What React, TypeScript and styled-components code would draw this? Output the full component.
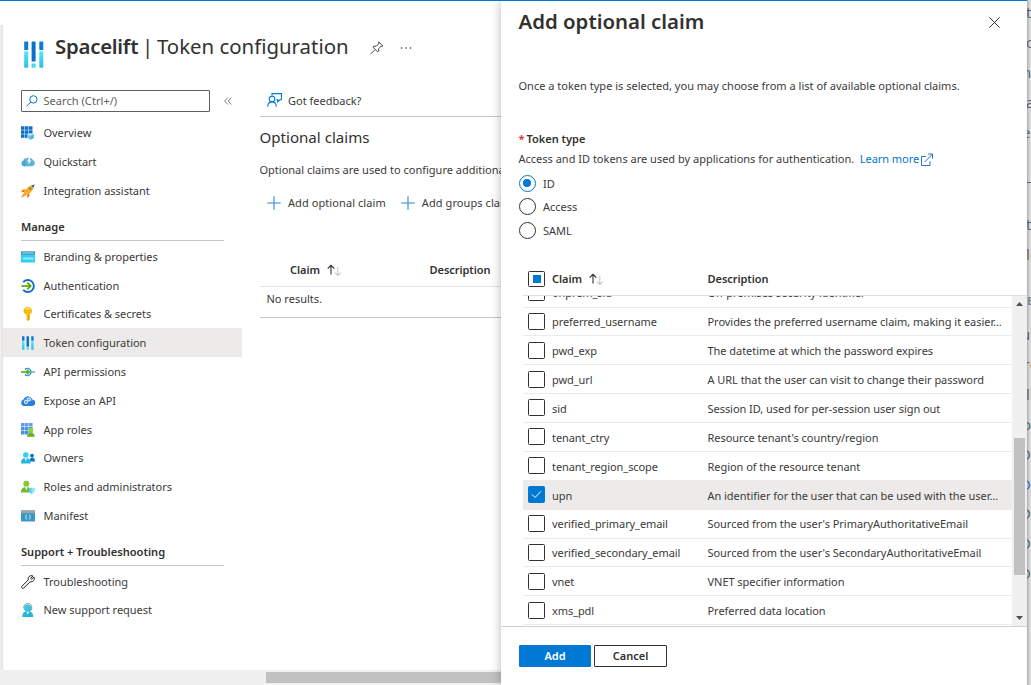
import React from 'react';
import styled, { createGlobalStyle } from 'styled-components';

const GlobalStyle = createGlobalStyle`
  * { box-sizing: border-box; }
  body {
    margin: 0;
    background: #fff;
    color: #3b3a39;
    font-family: "Noto Sans", "Liberation Sans", sans-serif;
    font-size: 11px;
    line-height: 16px;
    overflow: hidden;
  }
  svg { display: block; flex: none; }
`;

/* ---------- page frame ---------- */

const Frame = styled.div`
  display: flex;
  width: 1031px;
  height: 685px;
  overflow: hidden;
  background: #fff;
`;

const Portal = styled.div`
  display: flex;
  width: 1027px;
  flex: none;
  border-top: 1px solid #0078d4;
`;

const Blade = styled.div`
  display: flex;
  flex-direction: column;
  width: 501px;
  overflow: hidden;
`;

const BladeBody = styled.div`
  display: flex;
  height: 669px;
`;

const Gutter = styled.div`
  width: 3px;
  flex: none;
  margin-top: 24px;
  background: linear-gradient(to right, #f1f1f1, #e2e2e2);
`;

const BladeContent = styled.div`
  flex: 1;
  min-width: 0;
`;

const HorizontalTrack = styled.div`
  display: flex;
  align-items: center;
  height: 15px;
  padding-left: 266px;
  background: #f0f0f0;
`;

const HorizontalThumb = styled.div`
  flex: 1;
  height: 11px;
  background: #c1c1c1;
`;

/* ---------- blade header ---------- */

const BladeHeader = styled.header`
  display: flex;
  align-items: flex-start;
  height: 89px;
  padding: 30px 0 0 18px;
`;

const HeaderIcon = styled.div`
  margin: 10px 11px 0 3px;
`;

const Title = styled.h1`
  margin: 0;
  width: 293px;
  font-size: 20.4px;
  line-height: 30px;
  font-weight: 400;
  color: #323130;
  white-space: nowrap;
`;

const TitleName = styled.span`
  font-weight: 600;
  letter-spacing: -0.25px;
`;

const TitleDivider = styled.span`
  margin: 0 -1.6px;
`;

const HeaderAction = styled.div<{ $left: number }>`
  display: flex;
  align-items: center;
  height: 33px;
  margin-left: ${(p) => p.$left}px;
`;

const Columns = styled.div`
  display: flex;
`;

/* ---------- sidebar ---------- */

const Sidebar = styled.nav`
  width: 239px;
  flex: none;
`;

const SearchRow = styled.div`
  display: flex;
  align-items: center;
  gap: 13.5px;
  padding-left: 18px;
  margin-bottom: 6.6px;
`;

const SearchBox = styled.div`
  display: flex;
  align-items: center;
  gap: 5.5px;
  width: 189px;
  height: 22px;
  padding-left: 4px;
  border: 1px solid #605e5c;
  border-radius: 1px;
  color: #605e5c;
  letter-spacing: 0.05px;
`;

const NavRow = styled.a<{ $active?: boolean; $grouped?: boolean }>`
  display: flex;
  align-items: center;
  gap: 8.5px;
  height: 28.8px;
  padding: ${(p) => (p.$grouped ? 1.2 : 0)}px 0 0 18px;
  background: ${(p) => (p.$active ? '#edebe9' : 'transparent')};
  white-space: nowrap;
  letter-spacing: -0.03px;
`;

const SectionTitle = styled.h2`
  width: 203px;
  height: 36px;
  margin: 0 0 0.8px 18px;
  padding-top: 14px;
  border-bottom: 1px solid #c8c6c4;
  font-size: 11.1px;
  font-weight: 600;
  color: #323130;
  white-space: nowrap;
`;

/* ---------- main column ---------- */

const Main = styled.main`
  flex: 1;
  min-width: 0;
  padding-left: 18px;
  overflow: hidden;
  white-space: nowrap;
`;

const FeedbackBar = styled.div`
  display: flex;
  align-items: flex-start;
  gap: 6.5px;
  height: 27px;
  padding: 3px 0 0 6.5px;
  border-bottom: 1px solid #c8c6c4;
`;

const MainHeading = styled.h2`
  margin: 10px 0 0 -0.5px;
  font-size: 15.1px;
  line-height: 20px;
  font-weight: 400;
  color: #323130;
`;

const MainText = styled.p`
  margin: 15px 0 0 -0.5px;
`;

const Commands = styled.div`
  display: flex;
  gap: 15px;
  margin-top: 17px;
  padding-left: 7px;
`;

const Command = styled.button`
  display: flex;
  align-items: center;
  gap: 7px;
  padding: 0;
  border: 0;
  background: none;
  color: inherit;
  font: inherit;
  letter-spacing: 0.08px;
`;

const ResultsHead = styled.div`
  display: grid;
  grid-template-columns: 139.5px 1fr;
  margin-top: 51px;
  height: 25px;
  padding-left: 30px;
  border-bottom: 1px solid #e6e4e2;
`;

const ResultsBody = styled.div`
  height: 31px;
  padding: 4px 0 0 6.5px;
  border-bottom: 1px solid #c8c6c4;
`;

const ColumnTitle = styled.div`
  display: flex;
  gap: 6.5px;
  font-weight: 600;
  color: #323130;
  letter-spacing: -0.05px;
`;

/* ---------- panel ---------- */

const Panel = styled.section`
  display: flex;
  flex-direction: column;
  width: 526px;
  flex: none;
  background: #fff;
  box-shadow: 0 0 10px rgba(0, 0, 0, 0.28);
  clip-path: inset(0 0 0 -14px);
  white-space: nowrap;
`;

const PanelHeader = styled.header`
  display: flex;
  justify-content: space-between;
  padding: 5px 27px 0 17.5px;
`;

const PanelTitle = styled.h1`
  margin: 0;
  font-size: 20.4px;
  line-height: 31px;
  font-weight: 600;
  color: #323130;
`;

const CloseIcon = styled.div`
  padding-top: 10.5px;
`;

const PanelForm = styled.div`
  height: 231px;
  padding: 41px 0 0 17.5px;
`;

const PanelIntro = styled.div`
  letter-spacing: 0.01px;
`;

const FieldLabel = styled.div`
  display: flex;
  gap: 2px;
  margin-top: 37px;
  font-weight: 600;
  color: #323130;
`;

const Required = styled.span`
  color: #f5222d;
`;

const FieldHint = styled.div`
  display: flex;
  margin-top: 4px;
`;

const Link = styled.a`
  display: flex;
  align-items: center;
  gap: 1.5px;
  margin-left: 5.5px;
  color: #0078d4;
  letter-spacing: -0.05px;
`;

const Radios = styled.div`
  padding-top: 4.8px;
`;

const RadioRow = styled.label`
  display: flex;
  align-items: center;
  gap: 7.5px;
  height: 23.5px;
`;

const RadioMark = styled.span<{ $on?: boolean }>`
  display: grid;
  place-items: center;
  width: 17px;
  height: 17px;
  margin-top: -1px;
  border: 1px solid ${(p) => (p.$on ? '#0078d4' : '#323130')};
  border-radius: 50%;

  &::after {
    content: '';
    width: 8px;
    height: 8px;
    border-radius: 50%;
    background: ${(p) => (p.$on ? '#0078d4' : 'transparent')};
  }
`;

const TableHead = styled.div`
  display: grid;
  grid-template-columns: 24px 155.5px 1fr;
  height: 28px;
  margin-left: 22px;
  padding: 3px 0 0 5px;
  border-bottom: 1px solid #e1dfdd;
`;

const TableArea = styled.div`
  display: flex;
  height: 330px;
`;

const TableRows = styled.div`
  width: 489px;
  margin-left: 22px;
  overflow: hidden;
`;

const ScrolledRows = styled.div`
  margin-top: -17.34px;
`;

const ClaimRow = styled.div<{ $selected?: boolean }>`
  display: grid;
  grid-template-columns: 24px 155.5px 1fr;
  align-items: center;
  height: 28.89px;
  padding-left: 5px;
  border-bottom: 1px solid #edebe9;
  background: ${(p) => (p.$selected ? '#edebe9' : 'transparent')};
`;

const ClaimName = styled.span`
  margin-top: 1.7px;
  letter-spacing: -0.08px;
`;

const ClaimDescription = styled.span`
  margin-top: 1.7px;
  letter-spacing: -0.04px;
`;

const CheckMark = styled.span<{ $on?: boolean }>`
  display: grid;
  place-items: center;
  width: 17px;
  height: 17px;
  margin-top: -0.4px;
  border: 1px solid ${(p) => (p.$on ? '#0078d4' : '#323130')};
  border-radius: 1.5px;
  background: ${(p) => (p.$on ? '#0078d4' : '#fff')};
`;

const HeadCheck = styled(CheckMark)`
  height: 16px;
  margin-top: 0;

  &::after {
    content: '';
    width: 8px;
    height: 8px;
    background: #0078d4;
  }
`;

const VerticalTrack = styled.div`
  display: flex;
  flex-direction: column;
  align-items: center;
  justify-content: space-between;
  width: 15px;
  padding: 6px 0;
  background: #f0f0f0;
`;

const VerticalThumb = styled.div`
  width: 11px;
  height: 137px;
  margin-top: 90px;
  background: #c1c1c1;
`;

const PanelFooter = styled.footer`
  display: flex;
  align-items: flex-start;
  gap: 3px;
  flex: 1;
  padding: 18px 0 0 18px;
  border-top: 1px solid #d2d0ce;
`;

const Button = styled.button<{ $primary?: boolean }>`
  width: ${(p) => (p.$primary ? 72 : 73)}px;
  height: 22px;
  padding: 0;
  border: 1px solid ${(p) => (p.$primary ? '#0078d4' : '#323130')};
  border-radius: 1px;
  background: ${(p) => (p.$primary ? '#0078d4' : '#fff')};
  color: ${(p) => (p.$primary ? '#fff' : '#323130')};
  font: 600 11px/18px "Noto Sans", "Liberation Sans", sans-serif;
`;

/* ---------- dimmed document behind the portal ---------- */

const Behind = styled.aside`
  width: 4px;
  flex: none;
  overflow: hidden;
  background: linear-gradient(to right, #a6a6a6 0, #c9c9c9 1.5px, #dadada 3px, #dedede 4px);
  color: #57606c;
  font-family: "Open Sans", sans-serif;
  font-size: 15px;
`;

const BehindLines = styled.div`
  margin-top: -3px;
`;

const BehindLine = styled.div<{ $shift?: number; $gap?: number; $tone?: 'link' | 'tag' }>`
  height: 29.9px;
  margin-top: ${(p) => p.$gap ?? 0}px;
  line-height: 30px;
  text-indent: ${(p) => -(p.$shift ?? 0)}px;
  white-space: nowrap;
  color: ${(p) => (p.$tone === 'link' ? '#3f63c4' : p.$tone === 'tag' ? '#7a8896' : 'inherit')};
  font-weight: ${(p) => (p.$tone === 'tag' ? 700 : 400)};
  font-size: ${(p) => (p.$tone === 'tag' ? 11 : 15)}px;
`;

const BehindRule = styled.div`
  height: 1px;
  margin-top: 36px;
  background: #57606c;
`;

/* ---------- icons ---------- */

const Svg14 = ({ children }: { children: React.ReactNode }) => (
  <svg width="14" height="14" viewBox="0 0 14 14" fill="none">{children}</svg>
);

const TokenBars = ({ small }: { small?: boolean }) => (
  <svg width={small ? 14 : 20} height={small ? 14 : 27} viewBox={small ? '-1.5 0 23 27' : '0 0 20 27'} preserveAspectRatio={small ? 'none' : undefined}>
    <defs>
      <linearGradient id={small ? 'tbS' : 'tbL'} x1="0" y1="0" x2="0" y2="1">
        <stop offset="0" stopColor="#50e6ff" />
        <stop offset="1" stopColor="#32bedd" />
      </linearGradient>
    </defs>
    {[0.2, 15.3].map((x) => (
      <g key={x}>
        <rect x={x} y="0.5" width="4" height="8.6" rx="0.6" fill="#0a7bd8" />
        <rect x={x} y="10.2" width="4" height="16.5" rx="0.6" fill={`url(#${small ? 'tbS' : 'tbL'})`} />
      </g>
    ))}
    <rect x="7.6" y="0.5" width="4" height="20" rx="0.6" fill="#0a6fc8" />
    <rect x="7.6" y="22.4" width="4" height="4.3" rx="0.6" fill="#45d9f3" />
  </svg>
);

const OverviewIcon = () => (
  <Svg14>
    {[0, 4, 8].map((x) => [0, 4, 8].map((y) => (
      <rect key={`${x}-${y}`} x={x} y={y + 0.3} width="3.5" height="3.5" fill="#0f6fc6" />
    )))}
    <path d="M6 8.4 9.4 6.9l3.4 1.5v3.6L9.4 13.8 6 12z" fill="#7cc4e8" />
    <path d="M6 8.4 9.4 9.9l3.4-1.5L9.4 6.9z" fill="#b5e0f4" />
    <path d="M9.4 9.9v3.9l3.4-1.8V8.4z" fill="#59b4d9" />
  </Svg14>
);

const QuickstartIcon = () => (
  <Svg14>
    <path d="M3 11.2A2.900 2.900 0 0 1 2.300 5.700 2.600 2.600 0 0 1 5.500 3.500 4.200 4.200 0 0 1 12 5.300 3.100 3.100 0 0 1 11.200 11.200z" fill="#59b4d9" />
    <path d="M8.800 1.500 6 6.600h2L6.900 10 10.500 5.600H8.500L10.300 1.500z" fill="#fff" />
    <path d="M3.700 5.300 5 11.200H3A2.900 2.900 0 0 1 2.300 5.700z" fill="#48a6d0" />
  </Svg14>
);

const RocketIcon = () => (
  <Svg14>
    <path d="M4.500 5.300 1.500 5.800 0 8.200l3.200-.3zM8.700 9.500 8.200 12.500 6.100 13.900l.2-3.300z" fill="#ee7a12" />
    <path d="M3.200 8.500 0.300 13.700 5.500 10.800z" fill="#f26a21" />
    <path d="M3.300 9.300 1.600 12.400 4.700 10.700z" fill="#ffb900" />
    <path d="M3 8.300C5 4 8.500 1.300 13.500.5 12.700 5.500 10 9 5.700 11z" fill="#fbab1c" />
    <path d="M10.300 1.500 13.500.5l-1 3.300z" fill="#0f6fc6" />
    <circle cx="9.300" cy="4.700" r="1.100" fill="#3b7fa8" />
  </Svg14>
);

const BrandingIcon = () => (
  <Svg14>
    <rect x="0" y="1.500" width="14" height="11" rx="0.600" fill="#32d0f0" />
    <path d="M0 1.500h14v3H0z" fill="#3e86b8" />
    <path d="M1 2.500h12v1H1z" fill="#c9d9e4" />
    <path d="M2 7.500l.8 2 .8-2 .8 2 .8-2M5.600 7.500l.8 2 .8-2 .8 2 .8-2M9.200 7.500l.8 2 .8-2 .8 2 .8-2" stroke="#c8f6ff" strokeWidth="0.700" />
  </Svg14>
);

const AuthIcon = () => (
  <Svg14>
    <path d="M2.200 3.200A6 6 0 1 1 2.200 10.800" stroke="#0f6fc6" strokeWidth="1.900" />
    <path d="M.5 7h8.500" stroke="#57a300" strokeWidth="1.700" />
    <path d="M6.300 3.600 9.700 7l-3.400 3.400" stroke="#57a300" strokeWidth="1.700" />
  </Svg14>
);

const KeyIcon = () => (
  <Svg14>
    <path d="M6.700 0c2.500 0 4.300 1.800 4.300 4 0 1.700-1 3-2.400 3.600v4.900L7 14l-1.500-1.400v-1l.9-.8-.9-.9V7.600C3.700 7 2.500 5.700 2.500 4c0-2.200 1.800-4 4.200-4z" fill="#fbbc09" />
    <rect x="4.800" y="1.300" width="4" height="1.200" rx="0.600" fill="#ffe48a" />
    <path d="M8.600 7.600V12.500L7 14V7.800z" fill="#eaa300" />
  </Svg14>
);

const ApiPermissionsIcon = () => (
  <Svg14>
    <path d="M3.800 4.500a3.600 3.600 0 1 1 0 5" stroke="#3999c6" strokeWidth="1.400" />
    <path d="M10.200 7H14" stroke="#3999c6" strokeWidth="1.200" />
    <path d="M0 7h8M5.700 4.700 8.300 7 5.700 9.300" stroke="#57a300" strokeWidth="1.400" />
  </Svg14>
);

const CloudIcon = () => (
  <Svg14>
    <path d="M3.300 11.900A3.300 3.300 0 0 1 2.700 5.400 4.400 4.400 0 0 1 11 5.400a3.200 3.200 0 0 1 0 6.500z" fill="#2a80dc" />
    <path d="M1 6.500 2.700 5.400A4.400 4.400 0 0 1 11 5.400L13.200 7z" fill="#3f92ea" />
    <circle cx="4.900" cy="8" r="1.500" stroke="#e3f0ff" strokeWidth="1.200" />
    <circle cx="7.900" cy="5.500" r="1.500" stroke="#e3f0ff" strokeWidth="1.200" />
  </Svg14>
);

const AppRolesIcon = () => (
  <Svg14>
    {[0, 4, 8].map((x) => [0, 4, 8].map((y) => (
      <rect key={`${x}-${y}`} x={x} y={y} width="3.600" height="3.600" rx="0.300" fill={y === 0 ? '#5ea0ef' : '#4b8fe6'} />
    )))}
    <path d="M5.800 14c0-3 1.500-4.600 4-4.600s4 1.600 4 4.600z" fill="#6fb31a" stroke="#fff" strokeWidth="0.300" />
    <circle cx="9.800" cy="7" r="2.400" fill="#86d633" />
  </Svg14>
);

const OwnersIcon = () => (
  <Svg14>
    <path d="M8.600 10.500c0-2.700 1-4 2.600-4s2.800 1.300 2.800 4z" fill="#0078d4" />
    <circle cx="11" cy="4.600" r="1.900" fill="#0f6fc6" />
    <path d="M0 12.500C0 8.500 1.700 7 4.700 7s4.900 1.500 4.900 5.500z" fill="#28b5da" />
    <path d="M3.600 7 4.800 10.500 6 7z" fill="#e9fbff" />
    <circle cx="4.800" cy="4" r="2.800" fill="#32d0f0" />
  </Svg14>
);

const RolesIcon = () => (
  <Svg14>
    <path d="M0 12.500C0 8.500 2 7 5.200 7s5.300 1.500 5.300 5.500z" fill="#76b82a" />
    <path d="M4 7 5.300 10.500 6.600 7z" fill="#f1fbe3" />
    <circle cx="5.300" cy="3.700" r="3" fill="#86c92e" />
    <path d="M7.600 8.600 10.700 7.800l3.100.8c0 2.900-1 4.400-3.100 5.400-2.100-1-3.100-2.500-3.100-5.400z" fill="#50d5f0" />
    <path d="M10.700 7.800v6.200c2.100-1 3.100-2.500 3.100-5.400z" fill="#8eeafb" />
  </Svg14>
);

const ManifestIcon = () => (
  <Svg14>
    <rect y="1.500" width="14" height="11" fill="#3999c6" />
    <rect y="1.500" width="14" height="2.600" fill="#a0a1a2" />
    <path d="M6 5.800c-1 0-.8.500-.8 1.300 0 .6-.2.900-.7.900.5 0 .7.400.7 1 0 .8-.2 1.300.8 1.300M8 5.800c1 0 .8.500.8 1.300 0 .6.200.900.7.900-.5 0-.7.400-.7 1 0 .8.2 1.300-.8 1.300" stroke="#d6effa" strokeWidth="0.800" />
  </Svg14>
);

const WrenchIcon = () => (
  <Svg14>
    <path d="M12.900 2 10.600 4.200 9.600 3.300 11.900 1C9.300-.2 6.600 1.900 7.300 4.900L.9 11.300c-.5.500-.5 1.300 0 1.800s1.300.5 1.800 0L9.100 6.800C12.100 7.400 14.200 4.500 12.900 2z" stroke="#201f1e" strokeWidth="1" strokeLinejoin="round" />
  </Svg14>
);

const SupportIcon = () => (
  <Svg14>
    <path d="M1.300 14c0-4.200 2-5.700 5.400-5.700S12.200 9.800 12.200 14z" fill="#28b5da" />
    <path d="M5.300 8.400 6.700 11.800 8.100 8.400z" fill="#e9fbff" />
    <circle cx="6.700" cy="5.200" r="3.600" fill="#32c8ea" />
    <path d="M2.700 5.300C2.500 2.200 4.300.5 6.700.5s4.300 1.700 4.100 4.600c-.1 1.800-1 2.700-2.300 3" stroke="#8a8886" strokeWidth="0.900" />
  </Svg14>
);

const SearchIcon = () => (
  <svg width="12" height="12" viewBox="0 0 12 12" fill="none" stroke="#0078d4" strokeWidth="1">
    <circle cx="7.400" cy="4.400" r="3.700" />
    <path d="M4.700 7.100.4 11.400" />
  </svg>
);

const CollapseIcon = () => (
  <svg width="8" height="8" viewBox="0 0 8 8" fill="none" stroke="#605e5c" strokeWidth="0.800">
    <path d="M3.900.5.700 4l3.200 3.500M7.300.5 4.100 4l3.200 3.500" />
  </svg>
);

const PinIcon = () => (
  <svg width="14" height="14" viewBox="0 0 14 14" fill="none" stroke="#484644" strokeWidth="1">
    <path d="M8.700.8 12.900 5l-.9.500-1-.2-2.400 2.400.1 2.300-1 .9L2.900 6.100l.9-.9 2.400.1 2.500-2.500-.2-1.100z" />
    <path d="M5.200 8.500.5 13.200" />
  </svg>
);

const DotsIcon = () => (
  <svg width="12" height="4" viewBox="0 0 12 4" fill="#323130">
    <circle cx="1.500" cy="2" r="0.800" />
    <circle cx="6" cy="2" r="0.800" />
    <circle cx="10.500" cy="2" r="0.800" />
  </svg>
);

const FeedbackIcon = () => (
  <svg width="15" height="14" viewBox="0 0 15 14" fill="none" stroke="#0078d4" strokeWidth="1.100">
    <path d="M5 2.700V.6h9.400v6.200h-1.700l-2 2V6.800H9.200" />
    <circle cx="5" cy="6" r="2.800" />
    <path d="M.6 13.600C.9 10.600 2.600 8.900 5 8.900s4.100 1.700 4.400 4.700" />
  </svg>
);

const PlusIcon = () => (
  <svg width="14" height="14" viewBox="0 0 14 14" fill="none" stroke="#2b88d8" strokeWidth="1.100">
    <path d="M7 .2v13.600M.2 7h13.600" />
  </svg>
);

const SortIcon = () => (
  <svg width="15" height="16" viewBox="0 0 15 16" fill="none">
    <path d="M4 12.500V3.400M.7 6.700 4 3.400l3.300 3.300" stroke="#323130" strokeWidth="1.100" />
    <path d="M10.800 5v8.500M7.800 10.600l3 2.900 3-2.900" stroke="#c8c6c4" strokeWidth="1.100" />
  </svg>
);

const CrossIcon = () => (
  <svg width="11" height="11" viewBox="0 0 11 11" fill="none" stroke="#323130" strokeWidth="1">
    <path d="M.3.3l10.400 10.400M10.700.3.300 10.700" />
  </svg>
);

const ExternalIcon = () => (
  <svg width="12" height="13" viewBox="0 0 12 13" fill="none" stroke="#2472d4" strokeWidth="1">
    <path d="M5 3.500H.5v9h8.500V8.200M3.800 8.900 11.300 1.300M7 1h4.500v4.700" />
  </svg>
);

const TickIcon = () => (
  <svg width="11" height="9" viewBox="0 0 11 9" fill="none" stroke="#fff" strokeWidth="1">
    <path d="M1 4.500l3 3L10 1.300" />
  </svg>
);

const ArrowUp = () => (
  <svg width="7" height="4" viewBox="0 0 7 4"><path d="M3.500 0 7 4H0z" fill="#505050" /></svg>
);
const ArrowDown = () => (
  <svg width="7" height="4" viewBox="0 0 7 4"><path d="M3.500 4 0 0h7z" fill="#505050" /></svg>
);

/* ---------- data ---------- */

type NavItem = { label: string; icon: React.ReactNode; active?: boolean };

const general: NavItem[] = [
  { label: 'Overview', icon: <OverviewIcon /> },
  { label: 'Quickstart', icon: <QuickstartIcon /> },
  { label: 'Integration assistant', icon: <RocketIcon /> },
];

const manage: NavItem[] = [
  { label: 'Branding & properties', icon: <BrandingIcon /> },
  { label: 'Authentication', icon: <AuthIcon /> },
  { label: 'Certificates & secrets', icon: <KeyIcon /> },
  { label: 'Token configuration', icon: <TokenBars small />, active: true },
  { label: 'API permissions', icon: <ApiPermissionsIcon /> },
  { label: 'Expose an API', icon: <CloudIcon /> },
  { label: 'App roles', icon: <AppRolesIcon /> },
  { label: 'Owners', icon: <OwnersIcon /> },
  { label: 'Roles and administrators', icon: <RolesIcon /> },
  { label: 'Manifest', icon: <ManifestIcon /> },
];

const support: NavItem[] = [
  { label: 'Troubleshooting', icon: <WrenchIcon /> },
  { label: 'New support request', icon: <SupportIcon /> },
];

const claims = [
  ['onprem_sid', 'On-premises security identifier'],
  ['preferred_username', 'Provides the preferred username claim, making it easier…'],
  ['pwd_exp', 'The datetime at which the password expires'],
  ['pwd_url', 'A URL that the user can visit to change their password'],
  ['sid', 'Session ID, used for per-session user sign out'],
  ['tenant_ctry', "Resource tenant's country/region"],
  ['tenant_region_scope', 'Region of the resource tenant'],
  ['upn', 'An identifier for the user that can be used with the user…'],
  ['verified_primary_email', "Sourced from the user's PrimaryAuthoritativeEmail"],
  ['verified_secondary_email', "Sourced from the user's SecondaryAuthoritativeEmail"],
  ['vnet', 'VNET specifier information'],
  ['xms_pdl', 'Preferred data location'],
];

const selectedClaim = 'upn';

const NavList = ({ items, grouped }: { items: NavItem[]; grouped?: boolean }) => (
  <>
    {items.map((item) => (
      <NavRow key={item.label} $active={item.active} $grouped={grouped}>
        {item.icon}
        {item.label}
      </NavRow>
    ))}
  </>
);

export default function App() {
  return (
    <>
      <GlobalStyle />
      <Frame>
        <Portal>
          <Blade>
            <BladeBody>
              <Gutter />
              <BladeContent>
                <BladeHeader>
                  <HeaderIcon><TokenBars /></HeaderIcon>
                  <Title><TitleName>Spacelift</TitleName> <TitleDivider>|</TitleDivider> Token configuration</Title>
                  <HeaderAction $left={22}><PinIcon /></HeaderAction>
                  <HeaderAction $left={15.5}><DotsIcon /></HeaderAction>
                </BladeHeader>
                <Columns>
                  <Sidebar>
                    <SearchRow>
                      <SearchBox><SearchIcon />Search (Ctrl+/)</SearchBox>
                      <CollapseIcon />
                    </SearchRow>
                    <NavList items={general} />
                    <SectionTitle>Manage</SectionTitle>
                    <NavList items={manage} grouped />
                    <SectionTitle>Support + Troubleshooting</SectionTitle>
                    <NavList items={support} grouped />
                  </Sidebar>
                  <Main>
                    <FeedbackBar><FeedbackIcon />Got feedback?</FeedbackBar>
                    <MainHeading>Optional claims</MainHeading>
                    <MainText>Optional claims are used to configure additional</MainText>
                    <Commands>
                      <Command><PlusIcon />Add optional claim</Command>
                      <Command><PlusIcon />Add groups claim</Command>
                    </Commands>
                    <ResultsHead>
                      <ColumnTitle>Claim <SortIcon /></ColumnTitle>
                      <ColumnTitle>Description</ColumnTitle>
                    </ResultsHead>
                    <ResultsBody>No results.</ResultsBody>
                  </Main>
                </Columns>
              </BladeContent>
            </BladeBody>
            <HorizontalTrack><HorizontalThumb /></HorizontalTrack>
          </Blade>

          <Panel>
            <PanelHeader>
              <PanelTitle>Add optional claim</PanelTitle>
              <CloseIcon><CrossIcon /></CloseIcon>
            </PanelHeader>
            <PanelForm>
              <PanelIntro>Once a token type is selected, you may choose from a list of available optional claims.</PanelIntro>
              <FieldLabel><Required>*</Required>Token type</FieldLabel>
              <FieldHint>
                Access and ID tokens are used by applications for authentication.
                <Link>Learn more<ExternalIcon /></Link>
              </FieldHint>
              <Radios>
                <RadioRow><RadioMark $on />ID</RadioRow>
                <RadioRow><RadioMark />Access</RadioRow>
                <RadioRow><RadioMark />SAML</RadioRow>
              </Radios>
            </PanelForm>
            <TableHead>
              <HeadCheck />
              <ColumnTitle>Claim <SortIcon /></ColumnTitle>
              <ColumnTitle>Description</ColumnTitle>
            </TableHead>
            <TableArea>
              <TableRows>
                <ScrolledRows>
                  {claims.map(([name, description]) => {
                    const on = name === selectedClaim;
                    return (
                      <ClaimRow key={name} $selected={on}>
                        <CheckMark $on={on}>{on && <TickIcon />}</CheckMark>
                        <ClaimName>{name}</ClaimName>
                        <ClaimDescription>{description}</ClaimDescription>
                      </ClaimRow>
                    );
                  })}
                </ScrolledRows>
              </TableRows>
              <VerticalTrack>
                <ArrowUp />
                <VerticalThumb />
                <ArrowDown />
              </VerticalTrack>
            </TableArea>
            <PanelFooter>
              <Button $primary>Add</Button>
              <Button>Cancel</Button>
            </PanelFooter>
          </Panel>
        </Portal>

        <Behind>
          <BehindLines>
            <BehindLine $shift={1}>t</BehindLine>
            <BehindLine $shift={1}>c</BehindLine>
            <BehindLine $shift={5}>n</BehindLine>
            <BehindLine $shift={1}>a</BehindLine>
            <BehindLine $shift={5}>e</BehindLine>
            <BehindRule />
            <BehindLine $shift={1} $gap={26}>t</BehindLine>
            <BehindLine $shift={1}>li</BehindLine>
            <BehindLine $gap={17} $tone="tag">E</BehindLine>
            <BehindLine $shift={6} $gap={3}>u</BehindLine>
            <BehindLine $shift={3.5}>re</BehindLine>
            <BehindLine $shift={1}>ll</BehindLine>
            <BehindLine $shift={5}>o</BehindLine>
            <BehindLine $shift={7}>D</BehindLine>
            <BehindLine $shift={7} $tone="link">D</BehindLine>
            <BehindLine $shift={7}>D</BehindLine>
            <BehindLine $shift={7}>D</BehindLine>
            <BehindLine $shift={7}>D</BehindLine>
          </BehindLines>
        </Behind>
      </Frame>
    </>
  );
}
